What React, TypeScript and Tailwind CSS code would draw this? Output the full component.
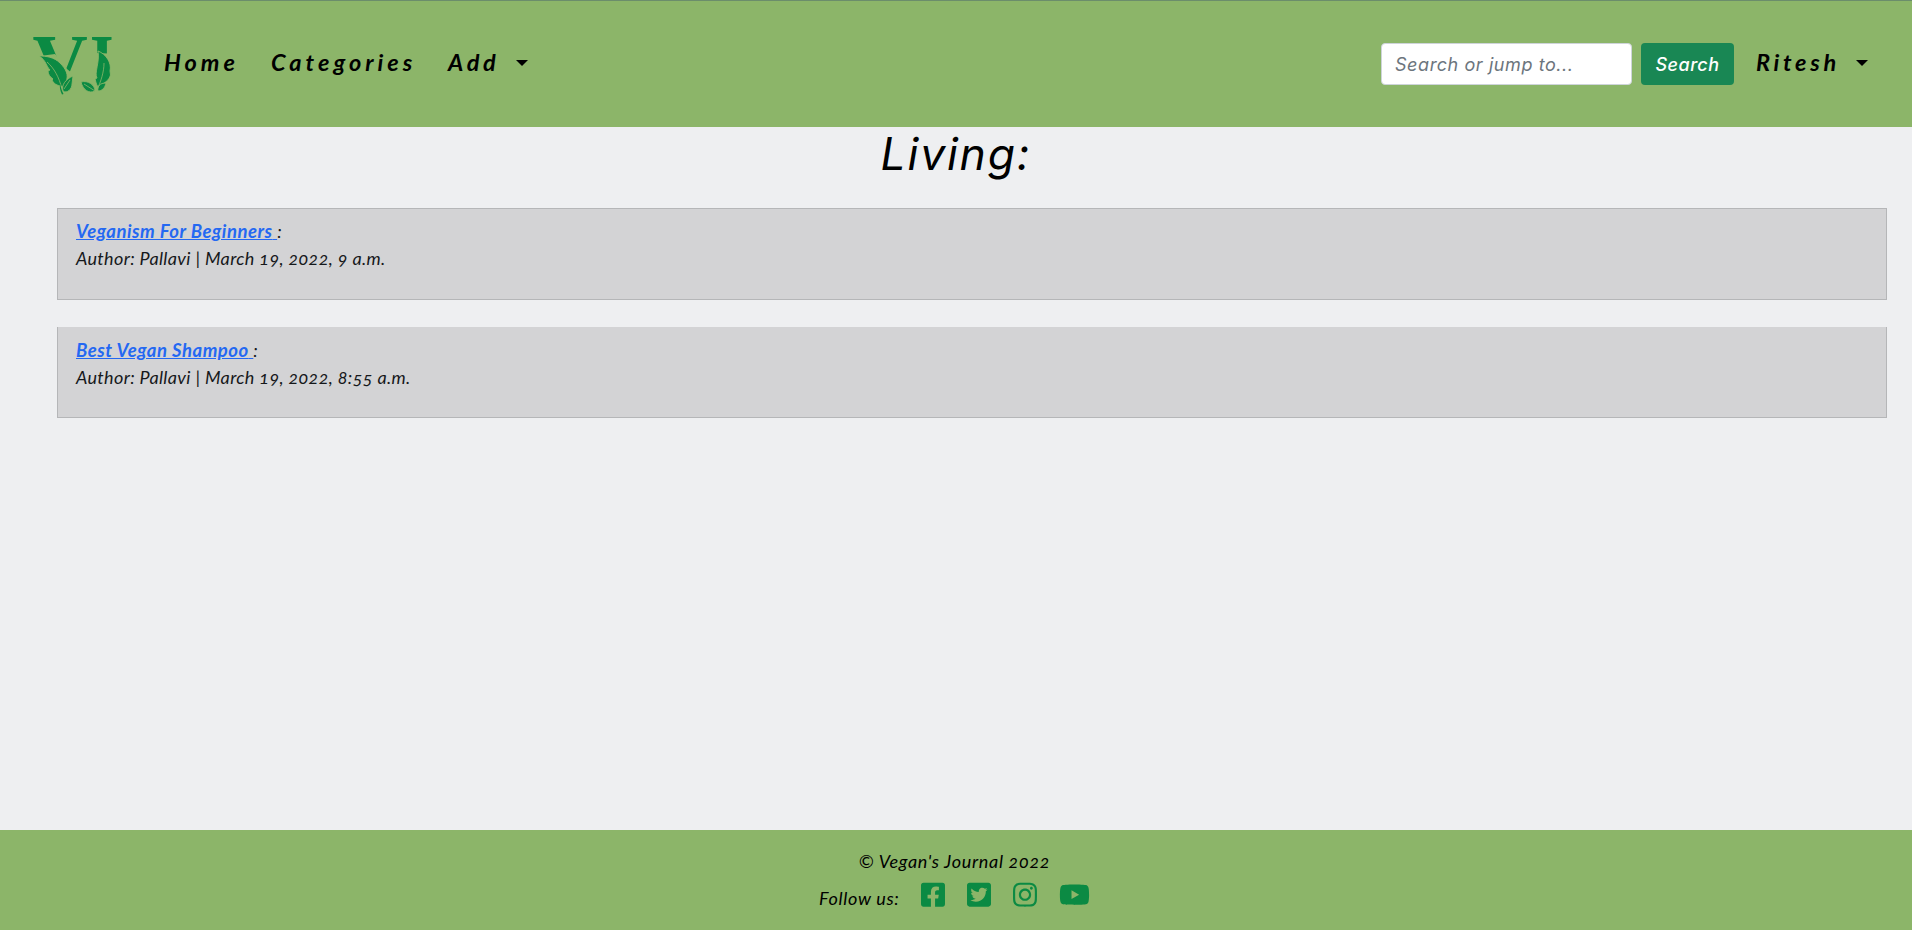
import {
  FaFacebookSquare,
  FaInstagram,
  FaTwitterSquare,
  FaYoutube,
} from "react-icons/fa";

const posts = [
  { title: "Veganism For Beginners", date: "March 19, 2022, 9 a.m." },
  { title: "Best Vegan Shampoo", date: "March 19, 2022, 8:55 a.m." },
];

function Logo() {
  return (
    <svg
      viewBox="25 25 100 80"
      className="h-20 w-[100px] shrink-0 overflow-visible not-italic"
      fill="#0b8a43"
      aria-label="VJ"
    >
      <defs>
        <clipPath id="letters">
          <path d="M25 25H120V54L96 53L90 50L73 74L67 69L55 54L40 56H25Z" />
        </clipPath>
      </defs>
      <g clipPath="url(#letters)" fontFamily="Liberation Serif, serif" fontWeight="700" fontSize="78">
        <text transform="translate(32.5 88) scale(0.98 1)">V</text>
        <text transform="translate(82 88) scale(0.8 1)">J</text>
      </g>
      <g stroke="#8cb569" strokeWidth="0.9">
        <path d="M39 56C46 56 54 57 60 63C66 69 69 75 66 82L63 87C59 85 55 86 52 80L53 79C50 77 48 74 48 71L50 70C46 66 46 60 39 56Z" />
        <path d="M73 76C66 79 61 85 63 91C67 94 72 89 72 84Z" />
        <path d="M98 51C106 54 112 63 110 71L110.500 75C109 81 104 83 98 87C96 84 96 82 95 79L97 78C94 73 100 62 98 51Z" />
        <path d="M81 82C88 80 95 85 95 91C89 94 83 90 81 82Z" />
        <path d="M106 83C100 83 97 86 98 91C102 91 105 88 106 83Z" />
      </g>
      <g fill="none" stroke="#8cb569" strokeWidth="0.8">
        <path d="M47 62C54 68 59 77 62 89" />
        <path d="M70 80L64 89" />
        <path d="M104 63C104 72 101 81 97 90" />
        <path d="M84 84L95 91" />
      </g>
      <path d="M60 84C61 88 62 91 63.500 94L62 94.500C60 90 59.500 87 60 84Z" />
    </svg>
  );
}

function Caret() {
  return (
    <span className="mb-[1px] h-0 w-0 border-x-[6.5px] border-t-[6.5px] border-x-transparent border-t-black" />
  );
}

export default function App() {
  return (
    <div className="flex h-[930px] w-full flex-col overflow-hidden bg-[#eeeff1] font-['Lato',sans-serif] text-black italic">
      <header className="flex h-[127px] shrink-0 items-start border-t border-[#6b8d6b] bg-[#8cb569] pt-6 pl-[25px]">
        <Logo />
        <nav className="flex h-[76px] items-center pl-[39px] text-[23.5px] font-bold">
          <a className="w-[107px] tracking-[4px]">Home</a>
          <a className="w-[177px] tracking-[4px]">Categories</a>
          <a className="flex items-center">
            <span className="w-[68px] tracking-[3.7px]">Add</span>
            <Caret />
          </a>
        </nav>
        <form className="ml-auto flex h-[78px] items-center gap-[9px] font-['Inter',sans-serif]">
          <input
            className="h-[42px] w-[251px] rounded-[4px] border border-[#ced4da] bg-white px-[13px] text-[18px] tracking-[0.58px] italic placeholder:text-[#6c757d]"
            placeholder="Search or jump to..."
          />
          <button
            type="button"
            className="h-[42px] w-[93px] rounded-[4px] bg-[#198754] text-[18px] font-medium tracking-[0.5px] text-white italic"
          >
            Search
          </button>
        </form>
        <div className="mr-[44px] ml-[22px] flex h-[76px] items-center text-[23.5px] font-bold">
          <span className="w-[100px] tracking-[3.7px]">Ritesh</span>
          <Caret />
        </div>
      </header>

      <main className="flex-1">
        <h1 className="h-[81px] text-center font-['Inter',sans-serif] text-[44.5px] leading-[54px] tracking-[1.8px]">
          Living:
        </h1>
        <div className="flex flex-col gap-[27px] pr-[25px] pl-[57px]">
          {posts.map((post) => (
            <article
              key={post.title}
              className="h-[91px] border border-[#b5b6b8] bg-[#d3d3d5] px-[18px] pt-[10px] text-[18px] leading-[27px] text-[#16181b] first:h-[92px] first:pt-[9px] not-first:border-t-0"
            >
              <p>
                <a className="text-[18.5px] font-bold tracking-[0.52px] text-[#2468f2] underline">{post.title} </a>:
              </p>
              <p className="tracking-[0.36px]">
                Author: Pallavi | <span className="[font-variant-numeric:oldstyle-nums]">{post.date}</span>
              </p>
            </article>
          ))}
        </div>
      </main>

      <footer className="flex h-[100px] shrink-0 flex-col items-center bg-[#8cb569] pt-[18px] text-[18px] leading-[27px]">
        <p className="mr-[3px] tracking-[0.7px] [font-variant-numeric:oldstyle-nums]">© Vegan's Journal 2022</p>
        <div className="mt-[2px] mr-[3px] flex h-[36px] items-center gap-[22px] text-[27.4px] text-[#0b8a43]">
          <span className="mt-[6px] w-[80px] text-[18px] tracking-[0.7px] whitespace-nowrap text-black">Follow us:</span>
          <FaFacebookSquare className="w-[24px]" />
          <FaTwitterSquare className="w-[24px]" />
          <FaInstagram className="w-[24px]" />
          <FaYoutube className="w-[31px]" />
        </div>
      </footer>
    </div>
  );
}
